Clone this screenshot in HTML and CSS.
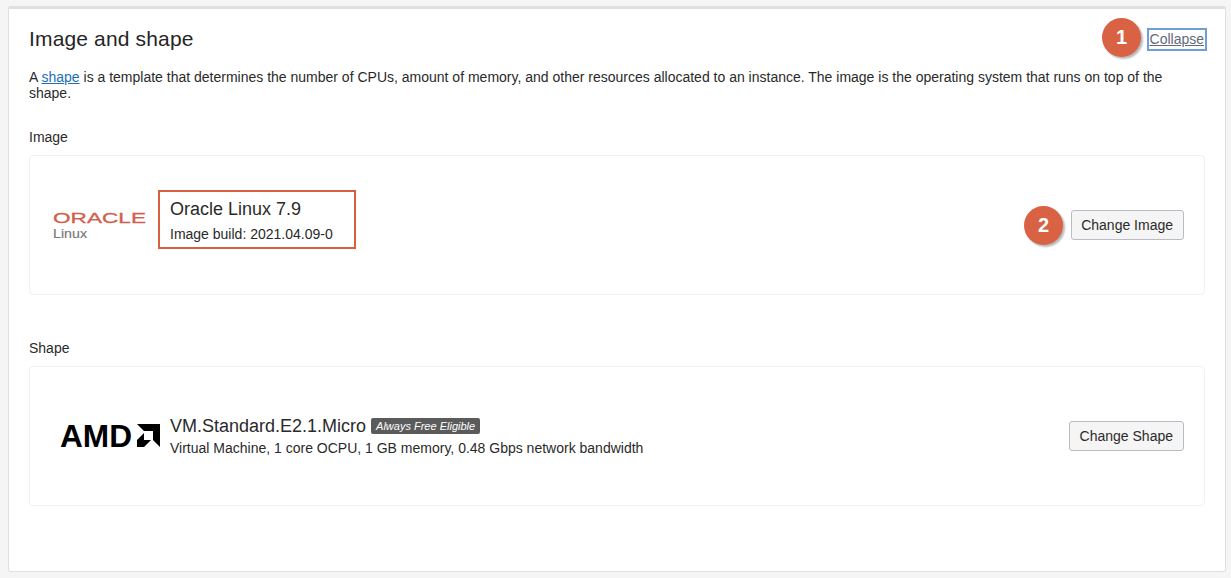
FILE: index.html
```html
<!DOCTYPE html>
<html lang="en">
<head>
    <meta charset="UTF-8">
    <meta name="viewport" content="width=device-width, initial-scale=1.0">
    <title>Image and shape</title>
    <link rel="stylesheet" href="styles.css">
</head>
<body>

    <div class="panel">
        <div class="panel-head">
            <h2>Image and shape</h2>
            <a class="collapse" href="#">Collapse</a>
            <span class="callout callout-one">1</span>
        </div>

        <p class="intro">A <a href="#">shape</a> is a template that determines the number of CPUs, amount of memory, and other resources allocated to an instance. The image is the operating system that runs on top of the shape.</p>

        <div class="section-label">Image</div>
        <div class="card">
            <div class="logo">
                <svg class="logo-svg" width="96" height="34" viewBox="0 0 96 34">
                    <text x="0" y="15" textLength="93" lengthAdjust="spacingAndGlyphs" class="oracle-word">ORACLE</text>
                    <text x="0" y="30" textLength="34" lengthAdjust="spacingAndGlyphs" class="oracle-sub">Linux</text>
                </svg>
            </div>
            <div class="info info-marked">
                <div class="info-title">Oracle Linux 7.9</div>
                <div class="info-sub">Image build: 2021.04.09-0</div>
            </div>
            <span class="callout callout-two">2</span>
            <button class="btn">Change Image</button>
        </div>

        <div class="section-label section-shape">Shape</div>
        <div class="card">
            <div class="logo">
                <svg class="logo-svg logo-amd" width="100" height="24" viewBox="0 0 100 24">
                    <text x="0" y="23" textLength="72" lengthAdjust="spacingAndGlyphs" class="amd-word">AMD</text>
                    <path d="M77 0h23v23l-7-7v-9h-9z" fill="#000"/>
                    <path d="M84 9v7h7l-7 7h-7v-7z" fill="#000"/>
                </svg>
            </div>
            <div class="info">
                <div class="info-title">VM.Standard.E2.1.Micro <span class="badge">Always Free Eligible</span></div>
                <div class="info-sub info-sub-tight">Virtual Machine, 1 core OCPU, 1 GB memory, 0.48 Gbps network bandwidth</div>
            </div>
            <button class="btn">Change Shape</button>
        </div>
    </div>

</body>
</html>
```

FILE: styles.css
```css
html, body {
    height: 100%;
}
body {
    box-sizing: border-box;
    margin: 0;
    padding: 6px 5px 6px 8px;
    font-family: "Liberation Sans", Arial, sans-serif;
    font-size: 14px;
    color: #2a2a2a;
    background-color: #f5f5f5;
    overflow: hidden;
}
.panel {
    box-sizing: border-box;
    height: 100%;
    padding: 0 20px;
    background: white;
    border: 1px solid #dfe0e2;
    border-top-width: 3px;
    border-radius: 3px;
}
.panel-head {
    position: relative;
    display: flex;
    align-items: center;
    justify-content: space-between;
    height: 40px;
    padding-top: 10px;
}
h2 {
    margin: 0;
    font-size: 21px;
    font-weight: normal;
    letter-spacing: 0.15px;
    color: #252525;
}
.collapse {
    margin-right: -2px;
    padding: 0 1px;
    font-size: 14px;
    line-height: 19px;
    color: #5f6b7a;
    border: 2px solid #6f9fd8;
}
.intro {
    margin: 10px 0 0;
    font-size: 14px;
    line-height: 16px;
}
.intro a {
    color: #1f6fb5;
}
.section-label {
    margin-top: 27px;
    line-height: 18px;
}
.section-shape {
    margin-top: 44px;
}
.card {
    position: relative;
    display: flex;
    align-items: center;
    box-sizing: border-box;
    height: 140px;
    margin-top: 9px;
    padding: 0 20px 0 23px;
    border: 1px solid #f1f1f1;
    border-radius: 4px;
}
.logo {
    display: flex;
    width: 105px;
    flex-shrink: 0;
}
.logo-svg {
    overflow: visible;
}
.oracle-word {
    font-family: "Liberation Sans", Arial, sans-serif;
    font-size: 15.5px;
    fill: #d0604c;
    stroke: #d0604c;
    stroke-width: 0.3px;
}
.oracle-sub {
    font-family: "Liberation Sans", Arial, sans-serif;
    font-size: 13px;
    fill: #777777;
    stroke: #777777;
    stroke-width: 0.15px;
}
.logo-amd {
    margin-left: 7px;
}
.amd-word {
    font-family: "Liberation Sans", Arial, sans-serif;
    font-size: 32px;
    font-weight: bold;
    fill: #000;
}
.info {
    flex: 1;
    margin-left: 12px;
}
.info-marked {
    flex: none;
    box-sizing: border-box;
    width: 198px;
    height: 59px;
    margin: 0 0 12px;
    padding: 6px 10px;
    border: 2px solid #d9603e;
}
.info-title {
    font-size: 18px;
    line-height: 22px;
}
.info-sub {
    margin-top: 5px;
    font-size: 14px;
    line-height: 18px;
}
.info-sub-tight {
    margin-top: 2px;
}
.badge {
    display: inline-block;
    padding: 0 5px;
    font-size: 11px;
    font-style: italic;
    line-height: 16px;
    color: white;
    vertical-align: 2px;
    background: #5b5b5b;
    border-radius: 2px;
}
.btn {
    margin-left: auto;
    height: 30px;
    padding: 0 10px 0 9.5px;
    font-family: inherit;
    font-size: 14px;
    color: #2a2a2a;
    background: #f5f5f5;
    border: 1px solid #b9bcc4;
    border-radius: 3px;
}
.callout {
    position: absolute;
    display: flex;
    align-items: center;
    justify-content: center;
    width: 39px;
    height: 39px;
    font-size: 20px;
    font-weight: bold;
    color: white;
    background: #d96244;
    border-radius: 50%;
    box-shadow: 2px 2px 2px rgba(0, 0, 0, 0.28);
}
.callout-one {
    top: 9px;
    right: 64px;
}
.callout-two {
    top: 50px;
    right: 141px;
}
```
